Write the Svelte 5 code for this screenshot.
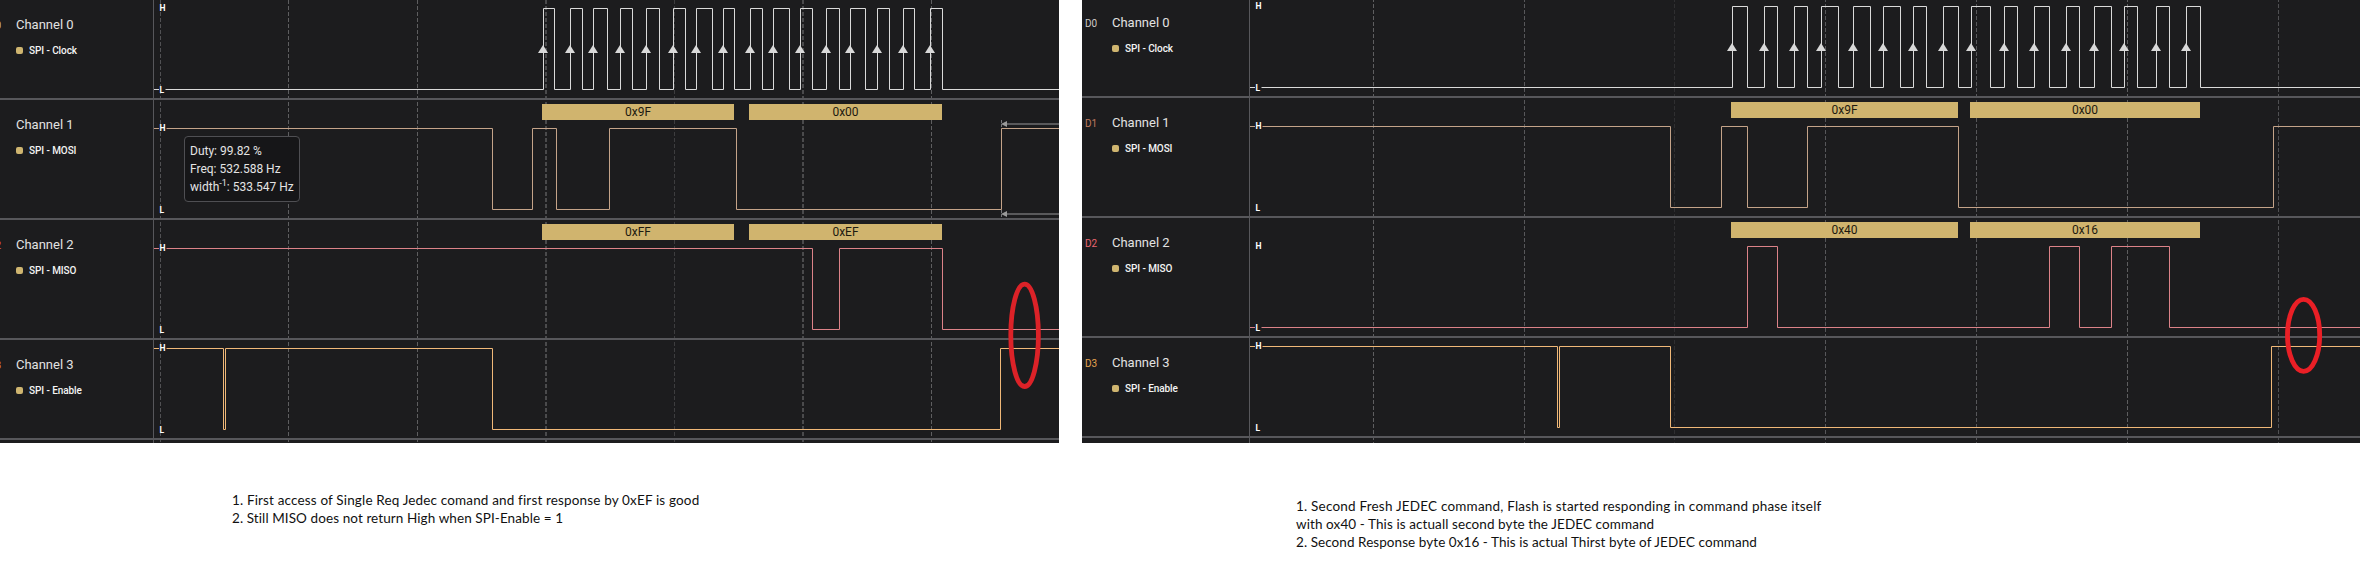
<script>
  const rows = [
    { id: 'D0', title: 'Channel 0', tag: 'SPI - Clock', idColor: '#cfcbc7', top: 0, h: 100 },
    { id: 'D1', title: 'Channel 1', tag: 'SPI - MOSI', idColor: '#c07a5e', top: 100, h: 120 },
    { id: 'D2', title: 'Channel 2', tag: 'SPI - MISO', idColor: '#ea6570', top: 220, h: 120 },
    { id: 'D3', title: 'Channel 3', tag: 'SPI - Enable', idColor: '#e5a450', top: 340, h: 100 },
  ];
  const levels = [[8.5, 89.5], [128.5, 209.5], [248.5, 329.5], [348.5, 429.5]];
  const colors = ['#dadada', '#c4a389', '#dc8288', '#f0b878'];

  // Each trace is a start level (0 = high, 1 = low) and the x of every edge.
  const panels = [
    {
      x: 0, w: 1059, side: 153, shift: 0, labelX: 160,
      grid: [[160, 1, 0.8], [288, 1, 1], [417, 1, 1], [545, 2, 0.7], [674, 1, 0.5], [802, 2, 0.7], [931, 1, 1]],
      traces: [
        [1, [543, 554, 570, 582, 593, 607, 620, 632, 646, 659, 673, 685, 696, 712, 723, 734, 750, 762, 773, 789, 800, 812, 826, 839, 850, 865, 877, 889, 903, 914, 930, 942]],
        [0, [492, 532, 556, 609, 736, 1001]],
        [0, [812, 839, 942]],
        [0, [223, 225, 492, 1000]],
      ],
      frames: [[542, 734, 104, '0x9F'], [749, 942, 104, '0x00'], [542, 734, 224, '0xFF'], [749, 942, 224, '0xEF']],
      mark: { cx: 1024.6, cy: 335.3, rx: 13.8, ry: 51.2, color: '#dc2228' },
      measure: true,
    },
    {
      x: 1082, w: 1278, side: 167, shift: -2, labelX: 1256,
      grid: [[1373, 1, 1], [1524, 1, 0.9], [1674, 1, 0.3], [1825, 1, 0.9], [1976, 1, 0.9], [2127, 1, 1], [2278, 1, 0.8]],
      traces: [
        [1, [1732, 1747, 1764, 1777, 1794, 1807, 1821, 1838, 1853, 1870, 1883, 1900, 1913, 1926, 1943, 1958, 1971, 1990, 2004, 2017, 2034, 2049, 2066, 2079, 2094, 2111, 2124, 2137, 2156, 2169, 2186, 2200]],
        [0, [1670, 1721, 1747, 1807, 1958, 2273]],
        [1, [1747, 1777, 2049, 2079, 2111, 2169]],
        [0, [1557, 1559, 1670, 2271]],
      ],
      frames: [[1731, 1958, 104, '0x9F'], [1970, 2200, 104, '0x00'], [1731, 1958, 224, '0x40'], [1970, 2200, 224, '0x16']],
      mark: { cx: 2303.6, cy: 337.3, rx: 16.1, ry: 36, color: '#ea1f26' },
      measure: false,
    },
  ];

  // Note lines with the tracking that gives each its measure.
  const notes = [
    [
      ['1. First access of Single Req Jedec comand and first response by 0xEF is good', 0.155],
      ['2. Still MISO does not return High when SPI-Enable = 1', 0.09],
    ],
    [
      ['1. Second Fresh JEDEC command, Flash is started responding in command phase itself', 0.2],
      ['with ox40 - This is actuall second byte the JEDEC command', 0.09],
      ['2. Second Response byte 0x16 - This is actual Thirst byte of JEDEC command', 0.064],
    ],
  ];

  function wave([start, edges], [hi, lo], x0, x1) {
    let level = start;
    const y = () => (level ? lo : hi);
    let d = `M${x0} ${y()}`;
    for (const e of edges) {
      d += `H${e + 0.5}`;
      level = 1 - level;
      d += `V${y()}`;
    }
    return d + `H${x1}`;
  }
</script>

<main>
  {#each panels as p, i}
    <section style:width="{p.w}px">
      <div class="panel">
        <div class="side" style:width="{p.side}px">
          <div class="rows" class:raised={p.shift < 0}>
            {#each rows as r}
              <div class="row" class:cut={i === 0} style:height="{r.h}px">
                <span class="id" style:color={r.idColor}>{r.id}</span>
                <div class="names">
                  <div class="title">{r.title}</div>
                  <div class="tag"><i></i><span>{r.tag}</span></div>
                </div>
              </div>
            {/each}
          </div>
        </div>
        <svg width={p.w - p.side} height="443" viewBox="{p.x + p.side} {-p.shift} {p.w - p.side} 443">
          {#each p.grid as [x, w, o]}
            <line x1={x + w / 2} x2={x + w / 2} y1="0" y2="445" stroke="#5e5e60" stroke-width={w} stroke-opacity={o} stroke-dasharray="4 2" />
          {/each}
          {#each rows as r}
            <rect x={p.x + p.side} y={r.top + r.h - 2} width={p.w} height="2" fill="#57575b" />
          {/each}
          <rect x={p.x + p.side} y="0" width="1" height="445" fill="#57575b" />
          {#each p.traces as t, c}
            <path d={wave(t, levels[c], p.x + p.side + 1, p.x + p.w)} fill="none" stroke={colors[c]} />
          {/each}
          {#each p.traces[0][1].filter((_, k) => k % 2 === 0) as x}
            <path d="M{x} 45l5 8h-10z" fill="#d8d8d8" />
          {/each}
          {#each levels as [hi, lo]}
            <rect x={p.labelX - 1} y={hi - 3} width="7.5" height="6" fill="#1c1c1e" />
            <rect x={p.labelX - 1} y={lo - 3} width="6.5" height="6" fill="#1c1c1e" />
            <text class="lvl" x={p.labelX - 0.6} y={hi + 2.5}>H</text>
            <text class="lvl" x={p.labelX - 0.6} y={lo + 3.5}>L</text>
          {/each}
          {#each p.frames as [a, b, y, label]}
            <rect x={a} {y} width={b - a} height="16" fill="#d0b46e" />
            <text class="byte" x={(a + b) / 2} y={y + 12}>{label}</text>
          {/each}
          {#if p.measure}
            {#each [124, 214] as y}
              <path d="M1006 {y}H1059" stroke="#59595b" stroke-width="2" />
              <path d="M1001 {y}l6 -3v6z" fill="#9a9a9a" />
            {/each}
            <path d="M1001.5 120V128M1001.5 210V218" stroke="#77777a" stroke-dasharray="3 1" />
          {/if}
          <ellipse cx={p.mark.cx} cy={p.mark.cy} rx={p.mark.rx} ry={p.mark.ry} fill="none" stroke={p.mark.color} stroke-width="4.8" />
        </svg>
        {#if p.measure}
          <div class="tip">
            <div>Duty: 99.82 %</div>
            <div>Freq: 532.588 Hz</div>
            <div>width<sup>-1</sup>: 533.547 Hz</div>
          </div>
        {/if}
      </div>
      <div class="notes {i === 0 ? 'first' : 'second'}">
        {#each notes[i] as [line, tracking]}
          <span style:letter-spacing="{tracking}px">{line}</span>
        {/each}
      </div>
    </section>
  {/each}
</main>

<style>
  :global(body) { background: #fff; }
  main { display: flex; gap: 23px; width: 2368px; height: 584px; overflow: hidden; font-family: Roboto, sans-serif; }
  section { flex: none; }
  .panel { position: relative; display: flex; height: 443px; overflow: hidden; background: #1c1c1e; }
  .side { flex: none; overflow: hidden; }
  .rows.raised { margin-top: -2px; }
  .row { box-sizing: border-box; display: flex; padding: 17px 0 0 3px; border-bottom: 2px solid #57575b; white-space: nowrap; }
  .row.cut { padding-left: 0; margin-left: -11px; }
  .id { flex: none; width: 27px; font-size: 10px; line-height: 18px; }
  .title { font-size: 13px; line-height: 16px; color: #e2e2e2; }
  .tag { display: flex; align-items: center; gap: 6px; margin-top: 10px; height: 14px; font-size: 10px; font-weight: 500; letter-spacing: -0.08px; color: #f4f4f4; }
  .tag i { width: 7px; height: 7px; border-radius: 2px; background: #cfb570; }
  svg { display: block; flex: none; }
  .lvl { font-size: 8.5px; font-weight: 700; fill: #fff; }
  .byte { font-size: 12px; text-anchor: middle; fill: #1d1a10; }
  .tip { position: absolute; left: 184px; top: 136px; box-sizing: border-box; width: 116px; height: 66px; padding: 5px 0 0 5px; border: 1px solid #4f4f53; border-radius: 4px; background: #161618; color: #e4e4e4; font-size: 12px; line-height: 18px; white-space: nowrap; }
  .tip sup { font-size: 9px; line-height: 0; vertical-align: 5px; }
  .notes { display: flex; flex-direction: column; align-items: flex-start; font: 13.5px/18px Lato, sans-serif; color: #111; white-space: nowrap; }
  .first { padding: 48px 0 0 232px; }
  .second { padding: 54px 0 0 214px; }
</style>
